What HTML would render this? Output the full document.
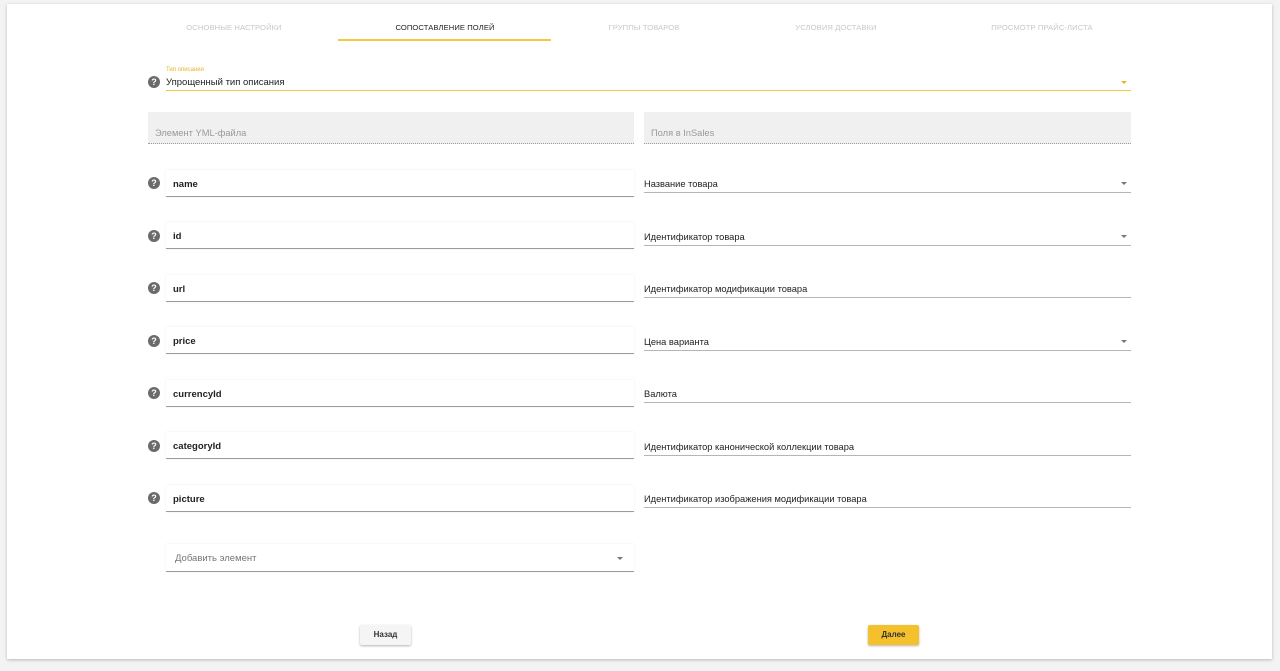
<!DOCTYPE html>
<html><head><meta charset="utf-8">
<style>
*{margin:0;padding:0;box-sizing:border-box}
body{width:1280px;height:671px;background:#f3f3f3;font-family:"Liberation Sans",Arial,sans-serif;position:relative;overflow:hidden}
.card{position:absolute;left:7px;top:4px;width:1265px;height:655px;background:#fff;box-shadow:0 1px 3px rgba(0,0,0,.25)}
.abs{position:absolute}
.tab{position:absolute;top:23px;font-size:7.6px;text-transform:uppercase;color:#c8c8c8;text-align:center;width:210px;letter-spacing:.1px}
.q{position:absolute;left:148px;width:12px;height:12px;border-radius:50%;background:#6b6b6b;color:#fff;font-size:9px;font-weight:bold;text-align:center;line-height:12px}
.box{position:absolute;left:166px;width:468px;height:27px;background:#fff;box-shadow:0 0 2px rgba(0,0,0,.08);border-bottom:1px solid #9a9a9a;font-size:9.5px;font-weight:bold;color:#222;padding-left:7px;line-height:29px}
.sel{position:absolute;left:644px;width:487px;height:20px;border-bottom:1px solid #b5b5b5;font-size:9.3px;color:#222;line-height:22px}
.arr{position:absolute;right:4px;top:9px;width:0;height:0;border-left:3px solid transparent;border-right:3px solid transparent;border-top:3px solid #777}
.hdr{position:absolute;top:112px;height:32px;background:#f0f0f0;border-bottom:1px dotted #999;font-size:9.3px;color:#9a9a9a;padding:16px 0 0 7px}
.btn{position:absolute;top:625px;height:20px;font-size:8px;font-weight:bold;text-align:center;line-height:20px;border-radius:2px;box-shadow:0 1px 2px rgba(0,0,0,.3)}
</style></head><body>
<div class="card"></div>
<div class="tab" style="left:129px">Основные настройки</div>
<div class="tab" style="left:340px;color:#222">Сопоставление полей</div>
<div class="tab" style="left:539px">Группы товаров</div>
<div class="tab" style="left:731px">Условия доставки</div>
<div class="tab" style="left:937px">Просмотр прайс-листа</div>
<div class="abs" style="left:338px;top:39px;width:213px;height:2px;background:#f2c744"></div>

<div class="abs" style="left:166px;top:67px;font-size:6px;color:#e5b520">Тип описания</div>
<div class="q" style="top:76px">?</div>
<div class="abs" style="left:166px;top:77px;font-size:9.5px;color:#222">Упрощенный тип описания</div>
<div class="abs" style="left:166px;top:90px;width:965px;height:1px;background:#f2c744"></div>
<div class="abs" style="left:1121px;top:81px;border-left:3px solid transparent;border-right:3px solid transparent;border-top:3px solid #e5b520"></div>

<div class="hdr" style="left:148px;width:486px">Элемент YML-файла</div>
<div class="hdr" style="left:644px;width:487px">Поля в InSales</div>

<div class="q" style="top:177px">?</div><div class="box" style="top:170px">name</div>
<div class="sel" style="top:173px">Название товара<div class="arr"></div></div>

<div class="q" style="top:230px">?</div><div class="box" style="top:222px">id</div>
<div class="sel" style="top:226px">Идентификатор товара<div class="arr"></div></div>

<div class="q" style="top:282px">?</div><div class="box" style="top:275px">url</div>
<div class="sel" style="top:278px">Идентификатор модификации товара</div>

<div class="q" style="top:335px">?</div><div class="box" style="top:327px">price</div>
<div class="sel" style="top:331px">Цена варианта<div class="arr"></div></div>

<div class="q" style="top:387px">?</div><div class="box" style="top:380px">currencyId</div>
<div class="sel" style="top:383px">Валюта</div>

<div class="q" style="top:440px">?</div><div class="box" style="top:432px">categoryId</div>
<div class="sel" style="top:436px">Идентификатор канонической коллекции товара</div>

<div class="q" style="top:492px">?</div><div class="box" style="top:485px">picture</div>
<div class="sel" style="top:488px">Идентификатор изображения модификации товара</div>

<div class="box" style="top:544px;height:28px;font-weight:normal;color:#777;padding-left:9px;line-height:29px">Добавить элемент<div class="arr" style="right:11px;top:13px"></div></div>

<div class="btn" style="left:360px;width:51px;background:#f5f5f5;color:#333">Назад</div>
<div class="btn" style="left:868px;width:51px;background:#f4c02c;color:#333">Далее</div>
</body></html>
